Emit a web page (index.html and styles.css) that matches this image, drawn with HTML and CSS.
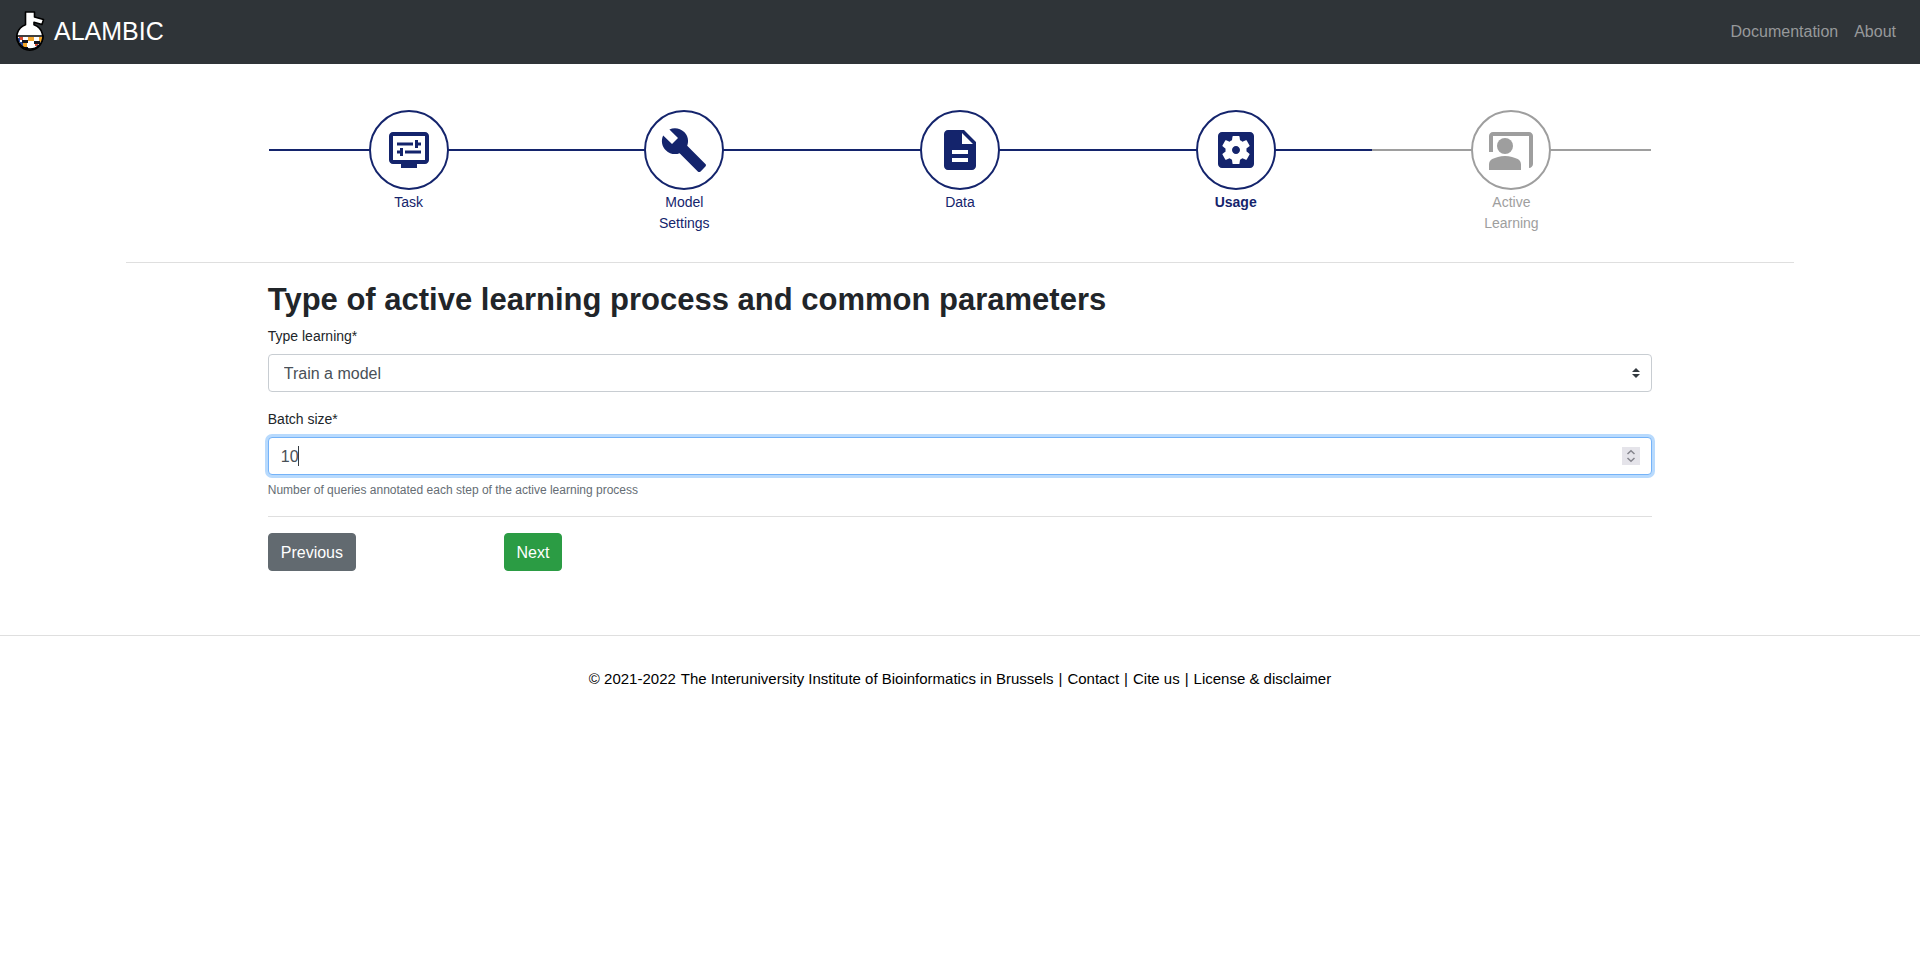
FILE: index.html
```html
<!DOCTYPE html>
<html lang="en">
<head>
<meta charset="utf-8">
<title>ALAMBIC</title>
<link rel="stylesheet" href="styles.css">
</head>
<body>
<header class="navbar">
  <a class="brand" href="#">
    <svg class="brand-logo" viewBox="0 0 30 42" aria-hidden="true">
      <defs><clipPath id="bowl"><path d="M2 26H28A13 13 0 0 1 2 26Z"/></clipPath></defs>
      <path d="M10.500 2h9v5l9 2.500-1.500 5-8-2.200v2.500A13 13 0 1 1 10.500 14.800Z" fill="#fff" stroke="#000" stroke-width="1.600" stroke-linejoin="round"/>
      <g clip-path="url(#bowl)">
        <path d="M2 26h26v13H2Z" fill="#fff"/>
        <path d="M4 27h4v3H4ZM20 33h3v3h-3Z" fill="#d8492e"/>
        <path d="M13 27h6v4h-6ZM24 27h4v5h-4ZM8 33h4v4h-4Z" fill="#f2a52b"/>
        <path d="M2 28h3v4H2ZM5 32h3v4H5ZM22 35h4v4h-4Z" fill="#2b4a9b"/>
        <path d="M7 30h6v3H7ZM19 31h6v3h-6ZM9 37h4v2H9Z" fill="#15151c"/>
      </g>
      <path d="M2 26H28A13 13 0 0 1 2 26Z" fill="none" stroke="#000" stroke-width="1.600"/>
    </svg>
    <span>ALAMBIC</span>
  </a>
  <nav class="nav-links">
    <a href="#">Documentation</a>
    <a href="#">About</a>
  </nav>
</header>

<main class="page">
  <ol class="stepper">
    <li class="step">
      <span class="step-icon"><svg viewBox="0 0 24 24"><path d="M20,3H4C2.890,3,2,3.890,2,5v12c0,1.100,0.890,2,2,2h4v2h8v-2h4c1.100,0,2-0.900,2-2V5C22,3.890,21.100,3,20,3z M20,17H4V5h16V17z M6,8.250h8v1.500H6V8.250z M16.500,9.750H18v-1.500h-1.500V7H15v4h1.500V9.750z M10,12.250h8v1.500h-8V12.250z M7.500,15H9v-4H7.500v1.250H6v1.500h1.500V15z"/></svg></span>
      <span class="step-label">Task</span>
    </li>
    <li class="step">
      <span class="step-icon"><svg viewBox="0 0 24 24"><path d="M22.700 19l-9.100-9.100c.9-2.300.4-5-1.500-6.900-2-2-5-2.400-7.400-1.300L9 6 6 9 1.600 4.700C.4 7.100.9 10.100 2.900 12.100c1.900 1.900 4.600 2.400 6.900 1.500l9.100 9.100c.4.4 1 .4 1.400 0l2.300-2.300c.5-.4.5-1.100.1-1.400z"/></svg></span>
      <span class="step-label">Model Settings</span>
    </li>
    <li class="step">
      <span class="step-icon"><svg viewBox="0 0 24 24"><path d="M14 2H6c-1.100 0-1.990.9-1.990 2L4 20c0 1.100.89 2 1.990 2H18c1.100 0 2-.9 2-2V8l-6-6zm2 16H8v-2h8v2zm0-4H8v-2h8v2zm-3-5V3.500L18.500 9H13z"/></svg></span>
      <span class="step-label">Data</span>
    </li>
    <li class="step current" aria-current="step">
      <span class="step-icon"><svg viewBox="0 0 24 24"><path d="M12 10c-1.100 0-2 .9-2 2s.9 2 2 2 2-.9 2-2-.9-2-2-2zm7-7H5c-1.110 0-2 .9-2 2v14c0 1.100.89 2 2 2h14c1.110 0 2-.9 2-2V5c0-1.100-.89-2-2-2zm-1.750 9c0 .23-.02.46-.05.68l1.480 1.160c.13.11.17.3.08.45l-1.400 2.420c-.09.15-.27.21-.43.15l-1.740-.7c-.36.28-.76.51-1.180.69l-.26 1.850c-.03.17-.18.3-.35.3h-2.800c-.17 0-.32-.13-.35-.29l-.26-1.850c-.43-.18-.82-.41-1.180-.69l-1.740.7c-.16.06-.34 0-.43-.15l-1.400-2.420c-.09-.15-.05-.34.08-.45l1.480-1.160c-.03-.23-.05-.46-.05-.69 0-.23.02-.46.05-.68l-1.480-1.160c-.13-.11-.17-.3-.08-.45l1.400-2.420c.09-.15.27-.21.43-.15l1.740.7c.36-.28.76-.51 1.180-.69l.26-1.850c.03-.17.18-.3.35-.3h2.800c.17 0 .32.13.35.29l.26 1.850c.43.18.82.41 1.180.69l1.740-.7c.16-.06.34 0 .43.15l1.400 2.420c.09.15.05.34-.08.45l-1.480 1.160c.03.23.05.46.05.69z"/></svg></span>
      <span class="step-label">Usage</span>
    </li>
    <li class="step upcoming">
      <span class="step-icon"><svg viewBox="0 0 24 24"><path d="M21,3H3C1.890,3,1,3.890,1,5v8h2V5h18v16c1.100,0,2-0.900,2-2V5C23,3.890,22.100,3,21,3z"/><circle cx="9" cy="10" r="4"/><path d="M15.390,16.560C13.710,15.700,11.530,15,9,15c-2.530,0-4.710,0.700-6.390,1.560C1.610,17.070,1,18.100,1,19.220V22h16v-2.780C17,18.100,16.390,17.070,15.390,16.560z"/></svg></span>
      <span class="step-label">Active Learning</span>
    </li>
  </ol>

  <hr class="rule">

  <form class="form">
    <h1 class="title">Type of active learning process and common parameters</h1>
    <div class="field">
      <label for="learning-type">Type learning*</label>
      <div class="control-wrap">
        <select id="learning-type" class="control select"><option>Train a model</option></select>
        <svg class="select-arrows" viewBox="0 0 8 10" aria-hidden="true"><path d="M4 0 0 4h8ZM4 10 0 6h8Z"/></svg>
      </div>
    </div>
    <div class="field">
      <label for="batch-size">Batch size*</label>
      <div class="control-wrap">
        <input id="batch-size" class="control number" type="number" value="10" aria-describedby="batch-help">
        <span class="caret" aria-hidden="true"></span>
        <svg class="spinner" viewBox="0 0 18 18" aria-hidden="true"><path d="M5.500 7 9 3.700 12.500 7M5.500 11 9 14.300 12.500 11"/></svg>
      </div>
      <small id="batch-help" class="help">Number of queries annotated each step of the active learning process</small>
    </div>
    <hr class="rule">
    <div class="actions">
      <div><button type="button" class="btn previous">Previous</button></div>
      <div><button type="submit" class="btn next">Next</button></div>
    </div>
  </form>
</main>

<footer class="footer">
  <span>© 2021-2022</span>
  <a href="#">The Interuniversity Institute of Bioinformatics in Brussels</a>
  <span>|</span>
  <a href="#">Contact</a>
  <span>|</span>
  <a href="#">Cite us</a>
  <span>|</span>
  <a href="#">License &amp; disclaimer</a>
</footer>
</body>
</html>
```

FILE: styles.css
```css
* { box-sizing: border-box; }

body {
  margin: 0;
  font: 14px/21px "Liberation Sans", Arial, sans-serif;
  color: #212529;
  background: #fff;
}

a { color: inherit; text-decoration: none; }

.navbar {
  display: flex;
  align-items: center;
  justify-content: space-between;
  height: 64px;
  padding: 0 24px 2px 15px;
  background: #2f3438;
}

.brand {
  display: flex;
  align-items: center;
  gap: 9px;
  font-size: 25px;
  line-height: 32px;
  color: #fff;
}

.brand-logo { width: 30px; height: 42px; }

.nav-links {
  display: flex;
  gap: 16px;
  font-size: 16px;
  color: #97999b;
}

.page { padding: 46px 126px 0; }

.stepper {
  display: grid;
  grid-template-columns: repeat(5, 1fr);
  margin: 0 8.5% 28px;
  padding: 0 3px;
  list-style: none;
}

.step {
  position: relative;
  display: flex;
  flex-direction: column;
  align-items: center;
  gap: 2px;
  color: #14246c;
}

.step::before {
  content: "";
  position: absolute;
  top: 39px;
  left: -2px;
  right: -2px;
  height: 2px;
  background: currentColor;
}

.step-icon {
  position: relative;
  display: grid;
  place-items: center;
  width: 80px;
  height: 80px;
  border: 2px solid currentColor;
  border-radius: 50%;
  background: #fff;
}

.step-icon svg { width: 48px; height: 48px; fill: currentColor; }

.step-label { width: 80px; text-align: center; }

.current { font-weight: bold; }
.upcoming { color: #9e9e9e; }

.rule {
  height: 1px;
  margin: 0 0 16px;
  border: 0;
  background: #dfdfdf;
}

.form { margin: 0 8.5%; }

.title {
  margin: 18px 0 6px;
  font-size: 31px;
  line-height: 38px;
  font-weight: bold;
}

.field { margin-bottom: 16px; }

.field label {
  display: block;
  margin-bottom: 7px;
  padding-top: 1px;
}

.control-wrap { position: relative; }

.control {
  display: block;
  width: 100%;
  height: 38px;
  padding: 7px 12px 5px;
  border: 1px solid #c8cdd2;
  border-radius: 4px;
  background: #fff;
  font: 16px/24px "Liberation Sans", Arial, sans-serif;
  color: #495057;
}

.select { padding-left: 15px; appearance: none; }

.select-arrows {
  position: absolute;
  top: 14px;
  right: 12px;
  width: 8px;
  height: 10px;
  fill: #343a40;
}

.number {
  appearance: textfield;
  border-color: #75b3f8;
  box-shadow: 0 0 0 3px #b8dafd;
}

.number:focus { outline: 0; }

.caret {
  position: absolute;
  top: 9px;
  left: 30px;
  width: 1px;
  height: 20px;
  background: #343a40;
}

.spinner {
  position: absolute;
  top: 10px;
  right: 12px;
  width: 18px;
  height: 18px;
  background: #e5e4ea;
  fill: none;
  stroke: #85858d;
  stroke-width: 1.5;
}

.help {
  display: block;
  margin-top: 5px;
  font-size: 12px;
  line-height: 20px;
  color: #656d74;
}

.actions {
  display: grid;
  grid-template-columns: repeat(6, 1fr);
  column-gap: 30px;
}

.btn {
  height: 38px;
  padding: 7px 12px 5px;
  border: 1px solid;
  border-radius: 4px;
  font: 16px/24px "Liberation Sans", Arial, sans-serif;
  color: #fff;
}

.previous { background: #626a70; border-color: #626a70; }
.next { background: #2b9c44; border-color: #2b9c44; }

.footer {
  display: flex;
  justify-content: center;
  gap: 5px;
  margin-top: 64px;
  padding: 32px 0;
  border-top: 1px solid #dfdfdf;
  font-size: 15px;
  color: #000;
}
```
